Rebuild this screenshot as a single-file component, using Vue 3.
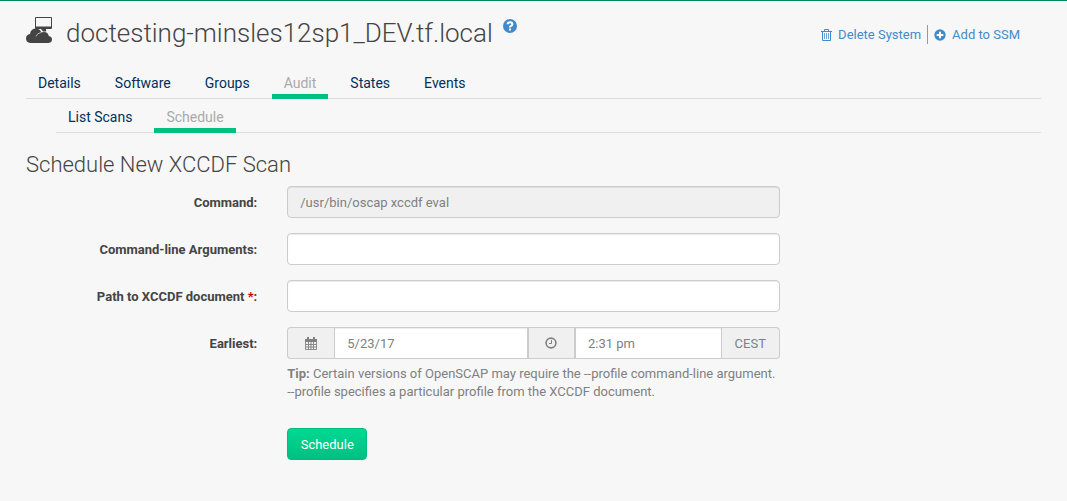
<script setup>
import { ref } from 'vue'

const tabs = ['Details', 'Software', 'Groups', 'Audit', 'States', 'Events']
const subTabs = ['List Scans', 'Schedule']
const command = ref('/usr/bin/oscap xccdf eval')
const args = ref('')
const path = ref('')
const date = ref('5/23/17')
const time = ref('2:31 pm')
</script>

<template>
  <main class="page">
    <header class="head">
      <h1 class="title">
        <svg class="system-icon" viewBox="0 0 26 26" aria-hidden="true">
          <path fill-rule="evenodd" d="M10 0h15q1 0 1 1v10q0 1-1 1H10q-1 0-1-1V1q0-1 1-1zM10 1v8.500h15V1z" />
          <path d="M15 12h5v2.500h-3z" />
          <path d="M4.500 26Q0 25.500 0 21.500q0-4 4-4.500.5-5 5.500-5.500 4.500 0 5.800 4 1-.6 2.700-.6 4 .2 4.800 4 3.200.5 3.200 3.600 0 3-3.500 3.500z" />
          <path d="M10 19.500q1-3.400 5-4" fill="none" stroke="#f7f7f7" stroke-width=".6" />
        </svg>
        <span class="name">doctesting-minsles12sp1_DEV.tf.local</span>
        <a class="help" href="#" aria-label="Help">
          <svg viewBox="0 0 14 14" aria-hidden="true">
            <circle cx="7" cy="7" r="7" fill="#428bca" />
            <path d="M4.700 5.300Q4.800 3.300 7 3.300q2.300 0 2.300 1.900 0 1.100-1.200 1.700Q7 7.500 7 8.600" fill="none" stroke="#fff" stroke-width="2.100" />
            <rect x="6" y="9.500" width="2" height="2" fill="#fff" />
          </svg>
        </a>
      </h1>
      <nav class="actions" aria-label="System actions">
        <a href="#" class="action">
          <svg class="trash" viewBox="0 0 11 12" fill="none" stroke="#428bca" aria-hidden="true">
            <path d="M0 2.500h11M3.500 2.500V.5h4v2M1.500 2.500v9h8v-9" />
            <path d="M3.500 4v6M5.500 4v6M7.500 4v6" opacity=".75" />
          </svg>
          Delete System
        </a>
        <a href="#" class="action">
          <svg class="plus" viewBox="0 0 12 12" aria-hidden="true">
            <circle cx="6" cy="6" r="5.700" fill="#428bca" />
            <path d="M6 2.700v6.600M2.700 6h6.600" stroke="#fff" stroke-width="2" />
          </svg>
          Add to SSM
        </a>
      </nav>
    </header>

    <nav class="tabs" aria-label="System">
      <a v-for="t in tabs" :key="t" href="#" class="tab" :class="{ active: t === 'Audit' }">{{ t }}</a>
    </nav>
    <nav class="tabs sub" aria-label="Audit">
      <a v-for="t in subTabs" :key="t" href="#" class="tab" :class="{ active: t === 'Schedule' }">{{ t }}</a>
    </nav>

    <h2 class="section">Schedule New XCCDF Scan</h2>

    <form class="form" @submit.prevent>
      <div class="row">
        <label for="command">Command:</label>
        <div class="field"><input id="command" v-model="command" class="control" type="text" disabled /></div>
      </div>
      <div class="row">
        <label for="args">Command-line Arguments:</label>
        <div class="field"><input id="args" v-model="args" class="control" type="text" /></div>
      </div>
      <div class="row">
        <label for="path">Path to XCCDF document <span class="req">*</span>:</label>
        <div class="field"><input id="path" v-model="path" class="control" type="text" /></div>
      </div>
      <div class="row">
        <label for="date">Earliest:</label>
        <div class="field">
          <div class="group">
            <span class="addon">
              <svg class="calendar" viewBox="0 0 12 13" aria-hidden="true">
                <path d="M0 2h12v3H0zM2 0h2v3H2zM8 0h2v3H8z" fill="#808080" />
                <path d="M.5 4v8.500h11V4M3.500 5v7M6 5v7M8.500 5v7M1 7.500h10M1 10h10" fill="none" stroke="#808080" stroke-width=".9" />
              </svg>
            </span>
            <input id="date" v-model="date" class="control date" type="text" />
            <span class="addon middle">
              <svg class="clock" viewBox="0 0 12 12" fill="none" stroke="#808080" aria-hidden="true">
                <circle cx="6" cy="6" r="4.900" stroke-width="1.600" />
                <path d="M6.500 3v3.500H4" />
              </svg>
            </span>
            <input v-model="time" class="control time" type="text" aria-label="Time" />
            <span class="addon zone">CEST</span>
          </div>
          <p class="tip"><strong>Tip:</strong> Certain versions of OpenSCAP may require the --profile command-line argument.<br />--profile specifies a particular profile from the XCCDF document.</p>
          <button class="submit" type="submit">Schedule</button>
        </div>
      </div>
    </form>
  </main>
</template>

<style>
body {
  background: #f7f7f7;
}
</style>

<style scoped>
* {
  box-sizing: border-box;
}
.page {
  border-top: 1px solid #00885f;
  padding: 0 26px 40px;
  font: 13px/18px Roboto, sans-serif;
  color: #444;
}
a {
  color: #428bca;
  text-decoration: none;
}
svg {
  display: block;
  flex: none;
}
.head {
  display: flex;
  justify-content: space-between;
  align-items: flex-start;
  padding: 16px 21px 0 0;
}
.title {
  display: flex;
  align-items: flex-start;
  margin: 0;
  font-size: 26px;
  line-height: 32px;
  font-weight: 300;
}
.system-icon {
  width: 26px;
  height: 26px;
  margin-right: 14px;
  fill: #444;
}
.help {
  margin: 2px 0 0 10px;
}
.help svg {
  width: 14px;
  height: 14px;
}
.actions {
  display: flex;
  margin-top: 8px;
}
.action {
  display: flex;
  align-items: center;
  padding-top: 1px;
}
.action + .action {
  border-left: 1px solid #999;
  margin-left: 6px;
  padding-left: 6px;
}
.trash {
  width: 11px;
  height: 12px;
  margin-right: 6px;
}
.plus {
  width: 12px;
  height: 12px;
  margin-right: 6px;
}
.tabs {
  display: flex;
  gap: 10px;
  height: 34px;
  margin-top: 16px;
  border-bottom: 1px solid #ddd;
}
.tabs.sub {
  margin: 0 0 0 30px;
}
.tab {
  height: 34px;
  padding: 8px 12px 0;
  border-bottom: 5px solid transparent;
  color: #02305a;
  font-size: 14px;
  line-height: 20px;
}
.tab.active {
  border-color: #00c081;
  color: #aaa;
}
.section {
  margin: 17px 0 7px;
  font-size: 22px;
  line-height: 29px;
  font-weight: 300;
}
.form {
  display: grid;
  gap: 15px;
  margin: 0 -15px;
}
.row {
  display: grid;
  grid-template-columns: 25% 50%;
}
label {
  padding: 8px 15px 0;
  text-align: right;
  font-weight: 700;
}
.req {
  color: #c00;
}
.field {
  padding: 0 15px;
  min-width: 0;
}
.control {
  display: block;
  width: 100%;
  min-width: 0;
  height: 32px;
  padding: 6px 12px;
  border: 1px solid #ccc;
  border-radius: 4px;
  background: #fff;
  box-shadow: inset 0 1px 1px rgba(0, 0, 0, 0.075);
  color: #808080;
  font: inherit;
}
.control:disabled {
  background: #f0f0f0;
}
.group {
  display: flex;
}
.addon {
  display: flex;
  align-items: center;
  justify-content: center;
  flex: none;
  width: 47px;
  height: 32px;
  border: 1px solid #ccc;
  border-right: 0;
  border-radius: 4px 0 0 4px;
  background: #f0f0f0;
  color: #808080;
}
.addon.middle {
  border-right: 1px solid #ccc;
  border-radius: 0;
}
.addon.zone {
  width: 58px;
  padding-top: 1px;
  border-left: 0;
  border-right: 1px solid #ccc;
  border-radius: 0 4px 4px 0;
}
.group .control {
  border-radius: 0;
}
.date {
  flex: 168 1 0;
}
.time {
  flex: 121 1 0;
}
.calendar {
  width: 12px;
  height: 13px;
}
.clock {
  width: 12px;
  height: 12px;
}
.tip {
  margin: 6px 0 27px;
  color: #808080;
}
.submit {
  display: block;
  height: 32px;
  min-width: 80px;
  padding: 1px 12px 0;
  border: 1px solid #00bc7e;
  border-radius: 4px;
  background: linear-gradient(#00d992, #00c081);
  color: #fff;
  font: inherit;
}
</style>
